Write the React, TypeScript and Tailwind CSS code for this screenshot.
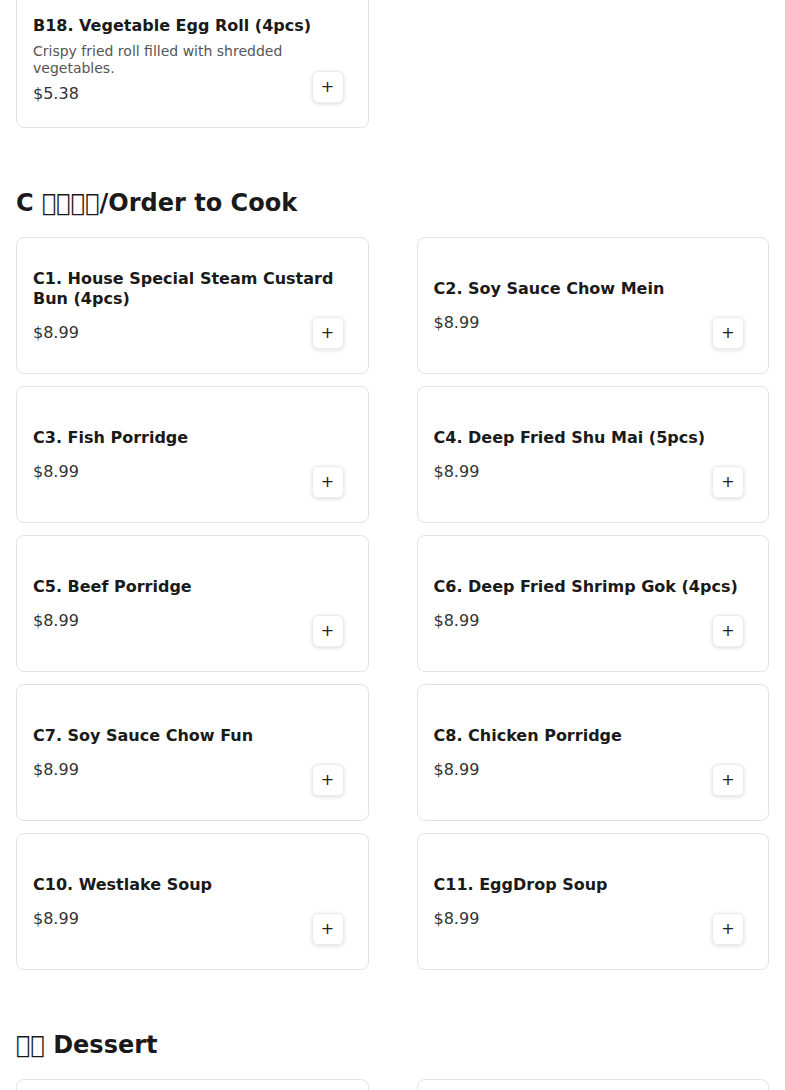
import React from "react";

type Item = { name: string; price: string; desc?: string };

const cSection: Item[] = [
  { name: "C1. House Special Steam Custard Bun (4pcs)", price: "$8.99" },
  { name: "C2. Soy Sauce Chow Mein", price: "$8.99" },
  { name: "C3. Fish Porridge", price: "$8.99" },
  { name: "C4. Deep Fried Shu Mai (5pcs)", price: "$8.99" },
  { name: "C5. Beef Porridge", price: "$8.99" },
  { name: "C6. Deep Fried Shrimp Gok (4pcs)", price: "$8.99" },
  { name: "C7. Soy Sauce Chow Fun", price: "$8.99" },
  { name: "C8. Chicken Porridge", price: "$8.99" },
  { name: "C10. Westlake Soup", price: "$8.99" },
  { name: "C11. EggDrop Soup", price: "$8.99" },
];

function Card({ item }: { item?: Item }) {
  return (
    <div className="relative flex min-h-[137px] items-center rounded-lg border border-[#e3e3e3] bg-white p-4">
      {item && (
        <>
          <div className="flex flex-col pt-[3px]">
            <div className="text-[16px] font-bold leading-[1.2] text-[#1a1a1a]">{item.name}</div>
            {item.desc && (
              <div className="mt-2 text-[14px] leading-[1.2] text-[#555]">{item.desc}</div>
            )}
            <div className={(item.desc ? "mt-[5px]" : "mt-[13px]") + " text-[16px] leading-6 text-[#333]"}>
              {item.price}
            </div>
          </div>
          <button className="absolute bottom-6 right-6 flex h-8 w-8 items-center justify-center rounded-md border border-[#ececec] bg-white text-[16px] leading-none text-[#222] shadow-[0_1px_4px_rgba(0,0,0,0.14)]">
            +
          </button>
        </>
      )}
    </div>
  );
}

export default function App() {
  return (
    <div
      className="min-h-screen overflow-hidden bg-white"
      style={{ fontFamily: '"DejaVu Sans", sans-serif' }}
    >
      <div className="-mt-[9px] px-4">
        <div className="grid grid-cols-2 gap-x-12 gap-y-3">
          <Card
            item={{
              name: "B18. Vegetable Egg Roll (4pcs)",
              desc: "Crispy fried roll filled with shredded vegetables.",
              price: "$5.38",
            }}
          />
        </div>

        <h2 className="mt-[59px] mb-[18px] text-[24px] font-bold leading-8 text-[#1a1a1a]">
          C {"\uE000\uE001\uE002\uE003"}/Order to Cook
        </h2>
        <div className="grid grid-cols-2 gap-x-12 gap-y-3">
          {cSection.map((it) => (
            <Card key={it.name} item={it} />
          ))}
        </div>

        <h2 className="mt-[59px] mb-[18px] text-[24px] font-bold leading-8 text-[#1a1a1a]">
          {"\uE004\uE005"} Dessert
        </h2>
        <div className="grid grid-cols-2 gap-x-12 gap-y-3">
          <Card />
          <Card />
        </div>
      </div>
    </div>
  );
}
